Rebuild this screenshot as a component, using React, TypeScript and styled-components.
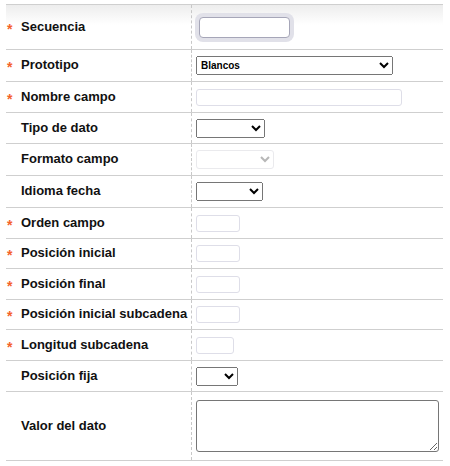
import styled, { createGlobalStyle } from "styled-components";

const GlobalStyle = createGlobalStyle`
  body {
    margin: 0;
    background: #fff;
    font-family: "Liberation Sans", Arial, sans-serif;
  }
`;

const Page = styled.div`
  padding: 4px 7px 0 6px;
`;

const Form = styled.div`
  width: 437px;
  border-bottom: 1px solid #cfcfcf;
`;

const Row = styled.div<{ $h: number; $shade?: boolean }>`
  box-sizing: border-box;
  display: grid;
  grid-template-columns: 186px 1fr;
  height: ${(p) => p.$h}px;
  border-top: 1px solid #cfcfcf;
  background: ${(p) =>
    p.$shade ? "linear-gradient(#ededed, #ffffff 45%)" : "transparent"};
`;

const Label = styled.div`
  display: flex;
  align-items: center;
  padding-bottom: 2px;
  border-right: 1px dashed #c8c8c8;
  font-size: 13px;
  font-weight: bold;
  color: #111;
  white-space: nowrap;
`;

const Star = styled.span`
  width: 14px;
  padding-left: 1px;
  color: #f4622a;
  font-size: 14px;
  line-height: 1;
  margin-top: 5px;
`;

const Field = styled.div`
  display: flex;
  align-items: center;
  padding-left: 4px;
`;

const TextInput = styled.input<{ $w: number; $focus?: boolean }>`
  box-sizing: border-box;
  width: ${(p) => p.$w}px;
  height: ${(p) => (p.$focus ? 21 : 17)}px;
  margin: 0 0 0 ${(p) => (p.$focus ? 3 : 0)}px;
  padding: 0 3px;
  border: 1px solid ${(p) => (p.$focus ? "#a6a6b8" : "#dedee8")};
  border-radius: ${(p) => (p.$focus ? 4 : 3)}px;
  box-shadow: ${(p) => (p.$focus ? "0 0 0 4px #e1e1e9" : "none")};
  font-size: 11px;
  outline: none;
`;

const Select = styled.select<{ $w: number }>`
  box-sizing: border-box;
  width: ${(p) => p.$w}px;
  height: 19px;
  margin: 0;
  font-family: "Liberation Sans", Arial, sans-serif;
  font-size: 10px;
  font-weight: bold;
  color: #000;

  &:disabled {
    background-color: #fff;
    border: 1px solid #e2e2e6;
    border-radius: 3px;
    color: #999;
  }
`;

const TextArea = styled.textarea`
  box-sizing: border-box;
  width: 243px;
  height: 52px;
  margin: 0;
  border: 1px solid #767676;
  border-radius: 3px;
`;

type RowDef = {
  label: string;
  req?: boolean;
  h: number;
  kind: "focus" | "text" | "select" | "disabled" | "area";
  w?: number;
  value?: string;
};

const rows: RowDef[] = [
  { label: "Secuencia", req: true, h: 45, kind: "focus", w: 91 },
  { label: "Prototipo", req: true, h: 32, kind: "select", w: 197, value: "Blancos" },
  { label: "Nombre campo", req: true, h: 31, kind: "text", w: 206 },
  { label: "Tipo de dato", h: 31, kind: "select", w: 69 },
  { label: "Formato campo", h: 32, kind: "disabled", w: 78 },
  { label: "Idioma fecha", h: 32, kind: "select", w: 67 },
  { label: "Orden campo", req: true, h: 31, kind: "text", w: 44 },
  { label: "Posición inicial", req: true, h: 30, kind: "text", w: 44 },
  { label: "Posición final", req: true, h: 31, kind: "text", w: 44 },
  { label: "Posición inicial subcadena", req: true, h: 30, kind: "text", w: 44 },
  { label: "Longitud subcadena", req: true, h: 31, kind: "text", w: 38 },
  { label: "Posición fija", h: 31, kind: "select", w: 42 },
  { label: "Valor del dato", h: 69, kind: "area" },
];

const renderField = (r: RowDef) => {
  switch (r.kind) {
    case "focus":
      return <TextInput $w={r.w!} $focus />;
    case "text":
      return <TextInput $w={r.w!} />;
    case "select":
      return (
        <Select $w={r.w!} defaultValue={r.value ?? ""}>
          <option value={r.value ?? ""}>{r.value ?? ""}</option>
        </Select>
      );
    case "disabled":
      return (
        <Select $w={r.w!} disabled>
          <option value=""></option>
        </Select>
      );
    case "area":
      return <TextArea />;
  }
};

export default function App() {
  return (
    <>
      <GlobalStyle />
      <Page>
        <Form>
          {rows.map((r, i) => (
            <Row key={r.label} $h={r.h} $shade={i === 0}>
              <Label>
                <Star>{r.req ? "*" : ""}</Star>
                {r.label}
              </Label>
              <Field>{renderField(r)}</Field>
            </Row>
          ))}
        </Form>
      </Page>
    </>
  );
}
